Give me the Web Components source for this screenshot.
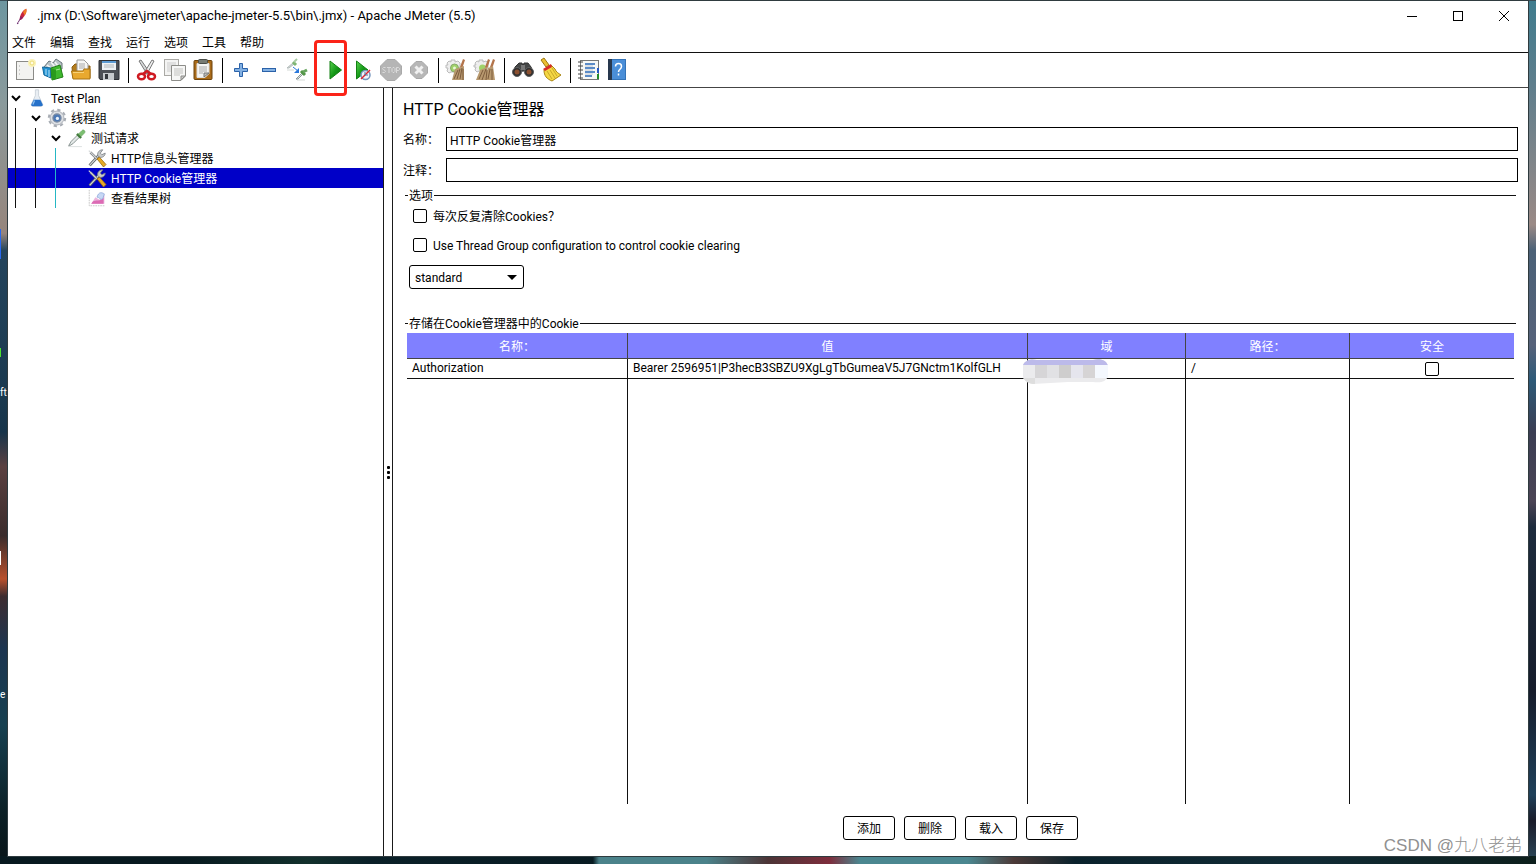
<!DOCTYPE html>
<html lang="zh-CN">
<head>
<meta charset="utf-8">
<title>.jmx - Apache JMeter (5.5)</title>
<style>
  html, body { height: 100%; margin: 0; }
  body {
    font: 12px/20px Roboto, "Noto Sans CJK SC", sans-serif;
    color: #000;
    overflow: hidden;
  }
</style>
</head>
<body>
<app-desktop>
  <app-window>
    <title-bar slot="top" caption=".jmx (D:\Software\jmeter\apache-jmeter-5.5\bin\.jmx) - Apache JMeter (5.5)"></title-bar>
    <menu-bar slot="top"></menu-bar>
    <tool-bar slot="top"></tool-bar>
    <test-tree slot="side">
      <tree-row level="0" icon="flask" open>Test Plan</tree-row>
      <tree-row level="1" icon="gear" open>线程组</tree-row>
      <tree-row level="2" icon="pipette" open>测试请求</tree-row>
      <tree-row level="3" icon="tools">HTTP信息头管理器</tree-row>
      <tree-row level="3" icon="tools" selected>HTTP Cookie管理器</tree-row>
      <tree-row level="3" icon="chart">查看结果树</tree-row>
    </test-tree>
    <cookie-panel slot="main"></cookie-panel>
  </app-window>
</app-desktop>

<script>
const ICONS = {
  feather: `<path d="M5 19 L9 12" stroke="#6b2a6e" stroke-width="1.2"/><path d="M7 15 C7 10 10 4 15 2 C16 6 13 12 8 16Z" fill="#c8253f"/><path d="M11 6 C12 4 14 2 15 2 C16 5 15 8 13 10Z" fill="#ee7a24"/><path d="M7 15 L8 11 L11 13 L8 16Z" fill="#8a2168"/><circle cx="4.500" cy="20" r="1" fill="#6b2a6e"/>`,
  newFile: `<rect x="2.500" y="2.500" width="17" height="18" fill="#f3f3f1" stroke="#8b8b88"/><path d="M5 7h1M5 11h1M5 15h1" stroke="#aaa"/><circle cx="18" cy="4" r="4" fill="#fbf3b8"/><circle cx="18" cy="4" r="2" fill="#fffce0" stroke="#eddc78"/>`,
  templates: `<path d="M2 8 L7 2 L11 4 L14 0 L20 4 V10 L2 11Z" fill="#b9c4c8" stroke="#69767b"/><path d="M5 6l4 3M9 3l4 5M13 3l3 4" stroke="#f4f6f6" stroke-width="1.500"/><path d="M0.500 8 L9 9 V19 L2 16Z" fill="#2393d3" stroke="#14699d"/><path d="M4 10v6M7 11v7" stroke="#b9e2f7"/><path d="M9 9 L18 6 L21 18 L10 21Z" fill="#3eb82d" stroke="#238017"/><path d="M9 9l5 2v9l-4 1z" fill="#2a9a1c"/><path d="M14 11l4-1" stroke="#a8ea99"/>`,
  open: `<path d="M2 8 L5 5 H12 L13 7 H20 V19 H3Z" fill="#b37c1c" stroke="#8b5d10"/><path d="M7 1h7l4 4v9H7z" fill="#f7f7f5" stroke="#999"/><path d="M9 5h6M9 7h6M9 9h6" stroke="#aaa"/><path d="M1.500 12 H13 L14 10 H20 V20 H3Z" fill="#e9a92f" stroke="#a87313"/><path d="M3 13.500h11" stroke="#f8d277"/>`,
  save: `<path d="M1 1.500 H21 V20.500 H2 L1 19Z" fill="#4b4f55" stroke="#2c2f34"/><rect x="4" y="2" width="14" height="9" fill="#edf1f4"/><rect x="4" y="2" width="14" height="2" fill="#5b9ad3"/><path d="M6 6h10M6 8h10" stroke="#b1b6ba"/><rect x="5" y="14" width="11" height="7" fill="#c6cacd"/><rect x="7" y="15" width="3" height="5" fill="#33373c"/>`,
  cut: `<path d="M3 2 L5 1 L14 14 L11 15Z" fill="#d8dadb" stroke="#777"/><path d="M18 2 L16 1 L8 14 L11 15Z" fill="#efefef" stroke="#777"/><ellipse cx="5.500" cy="17.500" rx="3.500" ry="2.800" fill="none" stroke="#cf1b22" stroke-width="2.500"/><ellipse cx="15.500" cy="17.500" rx="3.500" ry="2.800" fill="none" stroke="#cf1b22" stroke-width="2.500"/><path d="M7 15l4-3 4 3" stroke="#cf1b22" stroke-width="2.500" fill="none"/>`,
  copy: `<rect x="0.500" y="0.500" width="14" height="16" fill="#f4f4f3" stroke="#aaa9a5"/><path d="M3 4h9M3 6h9M3 8h4M3 10h4M3 12h4" stroke="#ccc"/><path d="M7.500 6.500 H21.500 V17 L17 21.500 H7.500Z" fill="#f6f6f5" stroke="#8d8d89"/><path d="M10 10h9M10 12h9M10 14h9M10 16h6" stroke="#c3c3c0"/><path d="M17 21v-4h4z" fill="#ccc" stroke="#8d8d89"/>`,
  paste: `<rect x="2" y="1.500" width="18" height="19" rx="1" fill="#a96b19" stroke="#6d430c"/><path d="M5 4.500h12v10l-4 4h-8z" fill="#f5f5f4" stroke="#ddd"/><path d="M7 8h8M7 10h8M7 12h8M7 14h4" stroke="#aaa"/><path d="M12 18v-4h5z" fill="#c2c2bf" stroke="#777"/><rect x="6.500" y="0.500" width="9" height="4" rx="1" fill="#777b74" stroke="#4b4e49"/>`,
  plus: `<path d="M9.500 4.500h3v5h5v3h-5v5h-3v-5h-5v-3h5z" fill="#83b1e3" stroke="#2b62a9"/>`,
  minus: `<rect x="4.500" y="9.500" width="13" height="3" fill="#83b1e3" stroke="#2b62a9"/>`,
  toggle: `<path d="M1 9 L7 4 L8 5 L3 9Z" fill="#d4d9d9" stroke="#b3bcbb"/><path d="M7 3l3 3" stroke="#7fb673" stroke-width="3"/><path d="M8 3l3-3" stroke="#a8cca2" stroke-width="2"/><path d="M1 11h7M11 21h8" stroke="#d5dbd8"/><path d="M10 20 L16 14 L17 15 L12 20Z" fill="#dfe4e4" stroke="#8d9898"/><path d="M15 12l4 4" stroke="#529647" stroke-width="3"/><path d="M17 13l4-2" stroke="#66a45d" stroke-width="3"/><path d="M7 8l5 4" stroke="#2a78db" stroke-width="1"/><path d="M13 9v5H8z" fill="#2a78db"/>`,
  run: `<path d="M6 2 L17.500 11 L6 20Z" fill="url(#g)" stroke="#128112"/>`,
  runNoTimers: `<path d="M4.500 2 L16 11 L4.500 20Z" fill="url(#g)" stroke="#128112"/><circle cx="13.500" cy="16" r="4.500" fill="#eef3fb" stroke="#7595bd" stroke-width="1.500"/><path d="M9 20l9-9" stroke="#df2430" stroke-width="1.500"/><path d="M13 13v3h3" fill="none" stroke="#4f70a0"/>`,
  stop: `<path d="M7 0.500h8l6.500 6.500v8l-6.500 6.500h-8l-6.500-6.500v-8z" fill="#b5b5b5" stroke="#a9a9a9"/><path d="M5.500 8.500H3.500L2.500 9.500 3 10.500 5 11.500 5.500 12.500 4.500 13.500H2.500 M7 8.500h4M9 8.500v5.500 M12 9.500l1-1h1l1 1v3l-1 1h-1l-1-1z M16.500 14V8.500h2l1 1v1l-1 1h-2" fill="none" stroke="#dadada"/>`,
  shutdown: `<path d="M8 2.500h6l5.500 5.500v6l-5.500 5.500h-6l-5.500-5.500v-6z" fill="#b7b7b7" stroke="#a8a8a8"/><path d="M7.500 7.500l7 7M14.500 7.500l-7 7" stroke="#f0f0f0" stroke-width="3"/>`,
  clear: `<path d="M1 4l2-2 2 1V1h4v2l3-1 2 2v9l-2 2H9v-2H5l-2 1-2-2 1-3H0V6h2z" fill="#eee" stroke="#bcbcbc"/><circle cx="8.500" cy="9" r="4" fill="#a0d26a" stroke="#87a86b"/><circle cx="8.500" cy="9" r="1.500" fill="#e9f7d8"/><path d="M14 8l3-8 2 1-3 9z" fill="#b3744b"/><path d="M9 10l9-3v14H6z" fill="#b8996f"/><path d="M12 11l-4 9M14 10l-3 10M16 9l-2 11M17 10v11" stroke="#7d5c3d"/>`,
  clearAll: `<path d="M1 4l2-2 2 1V1h4v2l3-1 2 2v9H9v-1H5l-2 1-2-2 1-3H0V6h2z" fill="#eee" stroke="#bcbcbc"/><circle cx="8.500" cy="9" r="3.500" fill="#a0d26a"/><path d="M11 8l3-8 2 1-3 9zM16 8l3-8 2 1-3 9z" fill="#b3744b"/><path d="M6 11l7-3 1 13H2zM14 9l5-2 2 14h-9z" fill="#b8996f"/><path d="M9 11l-4 9M12 10l-4 11M13 11l-1 10M16 10l-2 10M18 10v11" stroke="#7d5c3d"/>`,
  search: `<path d="M3 8l4-4h3l1 3 1-3h4l3 4 2 5-9-1-10 1z" fill="#454747" stroke="#333"/><circle cx="5" cy="13" r="4.500" fill="#303030" stroke="#606060"/><circle cx="17" cy="13" r="4.500" fill="#303030" stroke="#606060"/><circle cx="5" cy="13" r="2.500" fill="#8b5030"/><circle cx="17" cy="13" r="2.500" fill="#8b5030"/><rect x="9" y="6" width="4" height="5" fill="#777"/>`,
  broom: `<path d="M1 1l3-2 5 7-3 2z" fill="#eabf32" stroke="#9f7810"/><path d="M4 11l7-5 4 4c1 3 3 4 6 6l-9 6c-5-2-8-5-8-11z" fill="#f5d744" stroke="#aa8616"/><path d="M3 10l8-5 1 3-7 4z" fill="#d52b27"/><path d="M7 12l5 8M10 11l5 8M12 9l5 8" stroke="#c9a92b"/>`,
  log: `<rect x="2.500" y="1.500" width="18" height="19" fill="#f7f7f5" stroke="#777"/><path d="M7 5h10M7 9h10M7 13h10M7 17h7" stroke="#2868b8" stroke-width="1.500"/><path d="M7 7h8M7 11h8M7 15h8" stroke="#c0c7d2"/><path d="M0 3h5M0 7h5M0 11h5M0 15h5M0 19h5" stroke="#444"/><path d="M19 9h2v5h-2z" fill="#2657c1"/><path d="M19 15h2v5h-2z" fill="#218b27"/>`,
  help: `<rect x="2.500" y="0.500" width="17" height="20" fill="#4a8ed8" stroke="#3473b7"/><rect x="2" y="0" width="4" height="21" fill="#28384e"/><path d="M9.500 7.500c0-4 6-4 6 0 0 3-3 2.500-3 5.500M12.500 14.500v2" fill="none" stroke="#fff" stroke-width="1.500"/>`,
  flask: `<path d="M9 1h4l0 7 5 11c0 2-1 2-2 2H6c-2 0-2-1-2-2l5-11z" fill="#e9eef3" stroke="#c3ccd4"/><path d="M7 13h8l3 6c0 2-1 2-2 2H6c-2 0-2-1-2-2z" fill="#2671c9"/><path d="M8 14l-2 5" stroke="#8fc1f0" stroke-width="1.500"/>`,
  gear: `<circle cx="11" cy="11" r="10" fill="none" stroke="#a9aeb5" stroke-width="2.500" stroke-dasharray="4 3.854"/><circle cx="11" cy="11" r="8.500" fill="#dcdfe3" stroke="#a0a6ae"/><circle cx="11" cy="11" r="5" fill="#4c79b5" stroke="#7d8ca2" stroke-width="1.500"/><circle cx="11.500" cy="11.500" r="2" fill="#e9f1fa"/>`,
  pipette: `<path d="M1 20l3-5 8-8 2 3-8 8-5 3z" fill="#e4e9e8" stroke="#76827f"/><path d="M11 6l5 5" stroke="#417a3b" stroke-width="3"/><path d="M13 6l4-4c2-2 5 1 3 3l-4 4z" fill="#7bbf70" stroke="#69a760"/><path d="M2 21.500h15" stroke="#d5dada"/>`,
  tools: `<path d="M2 20l12-13" stroke="#575b5f" stroke-width="3.500"/><path d="M2 20l12-13" stroke="#d4d7d9" stroke-width="1.500"/><path d="M12 8c-1-4 2-7 6-7l-3 4 2 2 4-2c0 4-4 6-7 5z" fill="#c7cacc" stroke="#7b8084"/><path d="M3 4l8 8" stroke="#75797c" stroke-width="3"/><path d="M1 2l10 10" stroke="#d5d8da" stroke-width="1.500"/><path d="M11 12l3-2 8 9-3 3z" fill="#e7ab27" stroke="#9c6d10"/>`,
  chart: `<path d="M1.500 1v19.500H21" fill="none" stroke="#bbb" stroke-dasharray="2 1"/><path d="M4 18l5-8 5 3 6-6v11z" fill="#eab5dc"/><path d="M4 18c4-7 8-1 15-7v7z" fill="#dc6bb4"/><path d="M11 10c2-7 6-6 9-4l-2 6c-3 2-4-2-7-2z" fill="#c7d8f5" stroke="#8fa9da"/>`,
};
const icon = (name, size = 22) =>
  `<svg width="${size}" height="${size}" viewBox="0 0 22 22" fill="none" overflow="visible" aria-hidden="true"><defs><linearGradient id="g" x1="0" y1="0" x2="1" y2="1"><stop offset="0" stop-color="#5bd34f"/><stop offset=".5" stop-color="#159a18"/><stop offset="1" stop-color="#08700d"/></linearGradient></defs>${ICONS[name]}</svg>`;

const define = (name, render) => customElements.define(name, class extends HTMLElement {
  constructor() { super(); this.attachShadow({ mode: "open" }); }
  connectedCallback() {
    this.shadowRoot.innerHTML = `<style>*{box-sizing:border-box}:host{box-sizing:border-box}</style>${render(this)}`;
  }
});

define("app-desktop", () => `
<style>
  :host {
    display: flex; position: relative; height: 100vh; padding: 1px 8px 8px; overflow: hidden;
    background:
      linear-gradient(90deg, #07191f 0 12%, #12302c 20%, #0a2028 24%, #081b22 38.6%, #4b828a 39% 46%, #4c3436 50%, #7d2d3c 54%, #4b8790 56% 63%, #4c3a38 66%, #0a222c 70%, #112b35 85%, #0d1f1c 100%) bottom / 100% 8px no-repeat,
      linear-gradient(#3a4d57, #3a4d57) top / 100% 1px no-repeat,
      linear-gradient(#6d96a0 0, #8a9a9c 12%, #96857c 27%, #24445c 29%, #1b3a50 45%, #17344a 50%, #5b4040 54%, #3a2c2c 62%, #b8502d 67%, #3d2c30 69%, #1c3550 75%, #174050 84%, #0c2026 94%, #081418 100%) left / 8px 100% no-repeat,
      linear-gradient(#3f7c8e 0, #5f7e8c 10%, #9a8a86 26%, #4b6177 29%, #56627a 40%, #2d5a78 44%, #3b3e53 50%, #4b4455 58%, #1d2b3d 61%, #161c2b 80%, #20415a 92%, #1a1c2a 95%, #2d4b5c 100%) right / 8px 100% no-repeat;
  }
  ::slotted(*) { flex: 1; min-width: 0; }
  .label { position: absolute; left: 0; color: #fff; font-size: 10px; line-height: 16px; }
  .one { top: 385px; } .two { top: 687px; }
  .chip { position: absolute; left: 0; width: 1px; }
  .blue { top: 229px; height: 30px; background: #2868f0; }
  .green { top: 348px; height: 9px; background: #4be02c; }
  .white { top: 551px; height: 14px; background: #fff; }
  .mark { position: absolute; right: 14px; bottom: 6px; font-size: 17px; line-height: 24px; color: #909090; font-family: "Liberation Sans", "Noto Sans CJK SC", sans-serif; font-weight: 300; }
</style>
<slot></slot>
<span class="label one">ft</span><span class="label two">e</span>
<i class="chip blue"></i><i class="chip green"></i><i class="chip white"></i>
<div class="mark">CSDN @九八老弟</div>`);

define("app-window", () => `
<style>
  :host { display: flex; flex-direction: column; background: #fff; outline: 1px solid #2f3b3f; }
  .body { flex: 1; display: flex; min-height: 0; }
  .side { width: 375px; flex: none; }
  .split { width: 10px; flex: none; border: solid #1a1a1a; border-width: 0 1px; display: flex; flex-direction: column; align-items: center; justify-content: center; gap: 2px; }
  .split i { width: 3px; height: 3px; border-radius: 1px; background: #000; }
  .main { flex: 1; min-width: 0; display: flex; }
  ::slotted([slot=main]) { flex: 1; min-width: 0; }
</style>
<slot name="top"></slot>
<div class="body">
  <div class="side"><slot name="side"></slot></div>
  <div class="split" role="separator"><i></i><i></i><i></i></div>
  <div class="main"><slot name="main"></slot></div>
</div>`);

define("title-bar", el => `
<style>
  :host { display: flex; align-items: center; height: 30px; padding: 0 1px 0 6px; }
  .name { flex: 1; padding-left: 5px; white-space: nowrap; font-size: 13px; }
  svg { display: block; }
  button { width: 46px; height: 28px; border: 0; background: none; padding: 0; display: grid; place-items: center; }
</style>
${icon("feather", 18)}<span class="name">${el.getAttribute("caption")}</span>
<button aria-label="最小化"><svg width="10" height="10" stroke="#000"><path d="M0 5.500h10"/></svg></button>
<button aria-label="最大化"><svg width="10" height="10" stroke="#000" fill="none"><rect x=".5" y=".5" width="9" height="9"/></svg></button>
<button aria-label="关闭"><svg width="10" height="10" stroke="#000"><path d="M0 0l10 10M10 0l-10 10"/></svg></button>`);

define("menu-bar", () => `
<style>
  :host { display: flex; gap: 14px; height: 22px; padding-left: 4px; border-bottom: 1px solid #111; }
  button { border: 0; padding: 2px 0 0; background: none; font: inherit; color: inherit; line-height: 20px; width: 24px; white-space: nowrap; }
</style>
${["文件", "编辑", "查找", "运行", "选项", "工具", "帮助"].map(t => `<button>${t}</button>`).join("")}`);

define("tool-button", el => `
<style>
  :host { display: block; position: relative; width: 28px; height: 28px; }
  :host([marked]) { margin-left: 10px; }
  button { width: 100%; height: 100%; border: 0; padding: 0; background: none; display: grid; place-items: center; }
  .ring { position: absolute; left: -7px; top: -16px; width: 33px; height: 56px; border: 3px solid #fb2318; border-radius: 4px; pointer-events: none; }
</style>
<button aria-label="${el.getAttribute("label")}">${icon(el.getAttribute("icon"))}</button>
${el.hasAttribute("marked") ? `<span class="ring"></span>` : ""}`);

const TOOLS = [["newFile", "新建"], ["templates", "模板"], ["open", "打开"], ["save", "保存"], 0, ["cut", "剪切"], ["copy", "复制"], ["paste", "粘贴"], 0,
  ["plus", "展开"], ["minus", "折叠"], ["toggle", "切换"], ["run", "启动"], ["runNoTimers", "不停顿开始"], ["stop", "停止"], ["shutdown", "关闭"], 0,
  ["clear", "清除"], ["clearAll", "清除全部"], 0, ["search", "查找"], ["broom", "重置查找"], 0, ["log", "函数助手"], ["help", "帮助"]];
define("tool-bar", () => `
<style>
  :host { display: flex; align-items: center; height: 35px; padding-left: 3px; border-bottom: 1px solid #444; }
  .sep { width: 1px; height: 25px; margin: 0 4px 0 5px; background: #000; }
</style>
${TOOLS.map(t => t ? `<tool-button icon="${t[0]}" label="${t[1]}"${t[0] === "run" ? " marked" : ""}></tool-button>` : `<span class="sep"></span>`).join("")}`);

define("test-tree", () => `<style>:host { display: block; }</style><slot></slot>`);

define("tree-row", el => {
  const level = +el.getAttribute("level");
  const guides = Array.from({ length: level }, (_, i) => `<i class="g${i}"></i>`).join("");
  return `
<style>
  :host { display: flex; height: 20px; align-items: center; white-space: nowrap; }
  :host([selected]) { background: #0000c8; color: #fff; }
  i { width: 20px; height: 20px; flex: none; background: linear-gradient(#111, #111) 7px 0 / 1px 100% no-repeat; }
  .g2 { background-image: linear-gradient(#25b7c4, #25b7c4); }
  .arrow { width: 20px; flex: none; padding-left: 3px; display: flex; }
  .arrow svg { width: 10px; height: 10px; }
  .icon { width: 18px; margin-right: 5px; display: flex; }
  .text { padding-top: 2px; line-height: 20px; }
</style>
${guides}<span class="arrow">${el.hasAttribute("open") ? `<svg viewBox="0 0 10 10" fill="none" stroke="#000" stroke-width="2"><path d="M1 3l4 4 4-4"/></svg>` : ""}</span>
<span class="icon">${icon(el.getAttribute("icon"), 18)}</span><span class="text"><slot></slot></span>`;
});

define("field-row", el => `
<style>
  :host { display: flex; align-items: center; height: 24px; }
  label { width: 43px; flex: none; white-space: nowrap; padding-top: 2px; }
  input { flex: 1; min-width: 0; height: 24px; border: 1px solid #000; padding: 1px 3px 0; font: inherit; color: inherit; background: #fff; border-radius: 0; }
</style>
<label for="f">${el.getAttribute("label")}</label><input id="f" type="text" value="${el.getAttribute("value") || ""}">`);

define("check-box", el => `
<style>
  :host { display: flex; align-items: center; height: 14px; }
  input { appearance: none; width: 14px; height: 14px; margin: 0; border: 1px solid #000; border-radius: 2px; background: #fff; flex: none; }
  input:checked { background: #0000c8; }
  label { padding: 2px 0 0 6px; white-space: nowrap; line-height: 20px; }
</style>
<input id="c" type="checkbox"${el.hasAttribute("aria-label") ? ` aria-label="${el.getAttribute("aria-label")}"` : ""}>${el.textContent ? `<label for="c"><slot></slot></label>` : ""}`);

define("group-box", el => `
<style>
  :host { display: flex; flex-direction: column; }
  .legend { display: flex; align-items: center; height: 20px; white-space: nowrap; gap: 1px; padding: 0 2px; }
  .legend::before, .legend::after { content: ""; height: 1px; background: #111; width: 3px; }
  .legend::after { flex: 1; }
  .legend span { padding-top: 2px; }
  .content { flex: 1; min-height: 0; display: flex; flex-direction: column; }
</style>
<div class="legend"><span id="l">${el.getAttribute("label")}</span></div>
<div class="content" role="group" aria-labelledby="l"><slot></slot></div>`);

define("cookie-table", () => `
<style>
  :host { display: grid; }
  table { width: 100%; height: 100%; table-layout: fixed; border-collapse: separate; border-spacing: 0; }
  th, td { border-right: 1px solid #111; padding: 0 5px; text-align: left; white-space: nowrap; }
  th:last-child, td:last-child { border-right: 0; }
  th { height: 26px; padding-top: 2px; background: #8080ff; color: #fff; font-weight: 400; text-align: center; border-color: #444; border-bottom: 1px solid #444; }
  .data td { height: 20px; line-height: 19px; border-bottom: 1px solid #111; }
  .masked { position: relative; }
  .masked svg { position: absolute; left: -5px; top: -1px; }
  check-box { justify-content: center; }
  .name { width: 221px; } .domain { width: 158px; } .path { width: 164px; } .secure { width: 164px; }
</style>
<table>
  <colgroup><col class="name"><col><col class="domain"><col class="path"><col class="secure"></colgroup>
  <thead><tr><th>名称：</th><th>值</th><th>域</th><th>路径：</th><th>安全</th></tr></thead>
  <tbody>
    <tr class="data"><td>Authorization</td><td>Bearer 2596951|P3hecB3SBZU9XgLgTbGumeaV5J7GNctm1KolfGLH</td>
      <td class="masked"><svg width="86" height="26" aria-hidden="true"><defs><clipPath id="m"><path d="M0 7C3 1 9 1 14 2H70C78 0 84 3 85 8V18C83 24 78 25 70 24H45L10 26C3 25 0 21 0 18Z"/></clipPath></defs><g clip-path="url(#m)"><rect width="86" height="26" fill="#ebebed"/><rect width="86" height="7" fill="#bcbaea"/><path d="M12 7h12v13H12z" fill="#d6d5d7"/><path d="M24 7h12v13H24z" fill="#e1e1e4"/><path d="M36 7h12v13H36z" fill="#cecdcd"/><path d="M48 7h12v13H48z" fill="#e5e5ed"/><path d="M60 7h12v13H60z" fill="#d6d4d5"/><path d="M72 7h14v13H72z" fill="#f4f8fe"/><path d="M0 20h12v6H0z" fill="#dedede"/></g></svg></td>
      <td>/</td><td><check-box aria-label="安全"></check-box></td></tr>
    <tr><td></td><td></td><td></td><td></td><td></td></tr>
  </tbody>
</table>`);

define("cookie-panel", () => `
<style>
  :host { display: flex; flex-direction: column; padding: 10px 10px 16px; }
  h1 { margin: 0 0 5px; font-size: 16px; line-height: 24px; font-weight: 400; }
  .fields { display: flex; flex-direction: column; gap: 7px; margin-bottom: 3px; }
  .options { margin-bottom: 24px; }
  .options check-box { margin: 4px 0 11px 10px; }
  .options check-box + check-box { margin: 4px 0 13px 10px; }
  .picker { position: relative; margin-left: 6px; width: 115px; }
  .picker svg { position: absolute; right: 7px; top: 10px; pointer-events: none; }
  select { display: block; appearance: none; width: 100%; height: 24px; padding: 1px 5px 0; border: 1px solid #000; border-radius: 3px; font: inherit; color: inherit; background: #fff; }
  .stored { flex: 1; min-height: 0; }
  cookie-table { flex: 1; margin: 0 4px; }
  .actions { display: flex; justify-content: center; gap: 9px; margin-top: 12px; }
  .actions button { width: 52px; height: 24px; padding: 2px 0 0; border: 1px solid #000; border-radius: 3px; background: #fff; font: inherit; color: inherit; }
</style>
<h1>HTTP Cookie管理器</h1>
<div class="fields">
  <field-row label="名称：" value="HTTP Cookie管理器"></field-row>
  <field-row label="注释："></field-row>
</div>
<group-box class="options" label="选项">
  <check-box>每次反复清除Cookies？</check-box>
  <check-box>Use Thread Group configuration to control cookie clearing</check-box>
  <div class="picker"><select aria-label="Cookie 策略"><option>standard</option><option>netscape</option><option>ignoreCookies</option></select><svg width="10" height="5" aria-hidden="true"><path d="M0 0h10L5 5z"/></svg></div>
</group-box>
<group-box class="stored" label="存储在Cookie管理器中的Cookie"><cookie-table></cookie-table></group-box>
<div class="actions"><button>添加</button><button>删除</button><button>载入</button><button>保存</button></div>`);
</script>
</body>
</html>
